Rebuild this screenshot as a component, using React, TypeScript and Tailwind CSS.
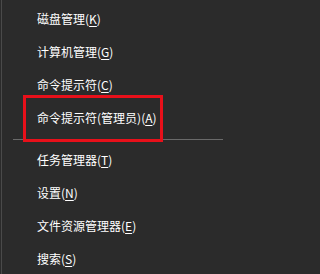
import React from "react";

type Item = { label: string; key: string };

const top: Item[] = [
  { label: "磁盘管理", key: "K" },
  { label: "计算机管理", key: "G" },
  { label: "命令提示符", key: "C" },
  { label: "命令提示符(管理员)", key: "A" },
];

const bottom: Item[] = [
  { label: "任务管理器", key: "T" },
  { label: "设置", key: "N" },
  { label: "文件资源管理器", key: "E" },
  { label: "搜索", key: "S" },
];

function Row({ item }: { item: Item }) {
  return (
    <div className="h-[33px] flex items-center pl-[35px] text-[12px] leading-none text-white">
      <span>
        {item.label}(<u className="underline-offset-[2px]">{item.key}</u>)
      </span>
    </div>
  );
}

export default function App() {
  return (
    <div className="min-h-screen w-full bg-[#2b2b2b]">
      <div
        className="relative w-[229px] h-[274px] overflow-hidden bg-[#2b2b2b] pl-px"
        style={{ fontFamily: '"Noto Sans CJK SC", "Noto Sans", sans-serif' }}
      >
        <div className="h-full border-l border-[#4a4a4a] pt-[2px]">
          {top.map((it) => (
            <Row key={it.key} item={it} />
          ))}

          {/* separator */}
          <div className="h-[9px] pt-[5px] pl-[11px] pr-[6px]">
            <div className="h-px bg-[#6a6a6a]" />
          </div>

          {bottom.map((it) => (
            <Row key={it.key} item={it} />
          ))}
        </div>

        {/* red highlight annotation */}
        <div className="absolute left-[23px] top-[95px] w-[140px] h-[47px] border-[3px] border-[#e8101a] pointer-events-none" />
      </div>
    </div>
  );
}
